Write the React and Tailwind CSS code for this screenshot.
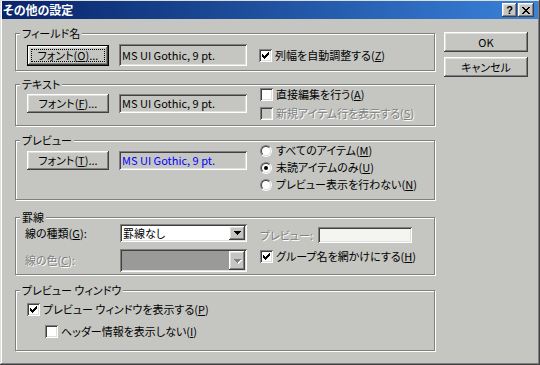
import React from 'react';

// Win2000-style bevels
const RAISED = 'bg-[#c5c6c2] shadow-[inset_-1px_-1px_#404040,inset_1px_1px_#fff,inset_-2px_-2px_#808080,inset_2px_2px_#dfdfdf]';
const SUNKEN = 'shadow-[inset_1px_1px_#808080,inset_-1px_-1px_#fff,inset_2px_2px_#404040,inset_-2px_-2px_#dfdfdf]';
const DISABLED = 'text-[#808080] [text-shadow:1px_1px_0_#fff]';

function Button({ className = '', children }) {
  return (
    <div className={`${RAISED} flex items-center justify-center shrink-0 ${className}`}>
      {children}
    </div>
  );
}

function FocusButton({ className = '', children }) {
  return (
    <div className={`border border-black shrink-0 flex ${className}`}>
      <div className={`${RAISED} flex-1 p-[3px] flex`}>
        <div className="flex-1 border border-dotted border-black flex items-center justify-center">
          {children}
        </div>
      </div>
    </div>
  );
}

function Field({ className = '', children }) {
  return (
    <div className={`${SUNKEN} flex items-center pl-[3px] shrink-0 ${className}`}>
      {children}
    </div>
  );
}

function CheckBox({ checked, disabled }) {
  return (
    <span className={`relative w-[13px] h-[13px] shrink-0 ${disabled ? 'bg-[#c5c6c2]' : 'bg-white'} ${SUNKEN}`}>
      {checked && (
        <svg className="absolute inset-0" width="13" height="13" viewBox="0 0 13 13" shapeRendering="crispEdges">
          <path
            fill="#000"
            d="M3 5h1v3H3z M4 6h1v3H4z M5 7h1v3H5z M6 6h1v3H6z M7 5h1v3H7z M8 4h1v3H8z M9 3h1v3H9z"
          />
        </svg>
      )}
    </span>
  );
}

function Radio({ checked }) {
  return (
    <span className="w-[12px] h-[12px] shrink-0 rounded-full border border-t-[#808080] border-l-[#808080] border-r-white border-b-white flex">
      <span className="flex-1 rounded-full border border-t-[#404040] border-l-[#404040] border-r-[#dfdfdf] border-b-[#dfdfdf] bg-white flex items-center justify-center">
        {checked && <span className="w-[4px] h-[4px] rounded-full bg-black" />}
      </span>
    </span>
  );
}

function Group({ label, className = '', children }) {
  return (
    <div className={`relative border border-[#808080] shadow-[inset_1px_1px_#fff,1px_1px_#fff] ${className}`}>
      <span className="absolute -top-[7px] left-[4px] px-[2px] bg-[#c5c6c2] leading-[13px]">{label}</span>
      {children}
    </div>
  );
}

function Arrow({ disabled }) {
  return (
    <svg width="7" height="4" viewBox="0 0 7 4" shapeRendering="crispEdges" className={disabled ? 'drop-shadow-[1px_1px_0_#fff]' : ''}>
      <path fill={disabled ? '#808080' : '#000'} d="M0 0h7v1H0z M1 1h5v1H1z M2 2h3v1H2z M3 3h1v1H3z" />
    </svg>
  );
}

export default function App() {
  return (
    <div className="w-[540px] h-[365px] overflow-hidden bg-[#c5c6c2] shadow-[inset_-1px_-1px_#404040,inset_1px_1px_#dfdfdf,inset_-2px_-2px_#808080,inset_2px_2px_#fff] pt-[1px] px-[2px] font-['Noto_Sans_CJK_JP','Noto_Sans',sans-serif] [font-feature-settings:'palt'] text-[11px] leading-none text-black">
      {/* title bar */}
      <div className="h-[18px] bg-linear-to-r from-[#0a246a] to-[#3a82da] flex items-center pl-[1px] pr-[4px]">
        <span className="text-white font-bold text-[12px]">その他の設定</span>
        <div className="ml-auto flex gap-[1px]">
          <Button className="w-[15px] h-[14px]">
            <span className="font-['Liberation_Sans',sans-serif] font-bold text-[11px]">?</span>
          </Button>
          <Button className="w-[16px] h-[14px]">
            <svg width="8" height="7" viewBox="0 0 8 7" shapeRendering="crispEdges">
              <path
                fill="#000"
                d="M0 0h2v1H0z M6 0h2v1H6z M1 1h2v1H1z M5 1h2v1H5z M2 2h4v1H2z M3 3h2v1H3z M2 4h4v1H2z M1 5h2v1H1z M5 5h2v1H5z M0 6h2v1H0z M6 6h2v1H6z"
              />
            </svg>
          </Button>
        </div>
      </div>

      <div className="flex">
        <div className="ml-[13px] w-[420px] flex flex-col">
          {/* フィールド名 */}
          <Group label="フィールド名" className="mt-[14px] h-[38px] pl-[11px] pt-[10px]">
            <div className="flex items-center">
              <FocusButton className="w-[82px] h-[21px]">
                フォント(<u>O</u>)...
              </FocusButton>
              <Field className="ml-[10px] w-[128px] h-[22px]">MS UI Gothic, 9 pt.</Field>
              <label className="ml-[12px] flex items-center gap-[3px]">
                <CheckBox checked />
                <span>列幅を自動調整する(<u>Z</u>)</span>
              </label>
            </div>
          </Group>

          {/* テキスト */}
          <Group label="テキスト" className="mt-[13px] h-[42px] pl-[11px] pt-[1px] flex items-start">
            <div className="mt-[8px] flex">
              <Button className="w-[82px] h-[19px]">フォント(<u>F</u>)...</Button>
              <Field className="ml-[10px] w-[128px] h-[19px]">MS UI Gothic, 9 pt.</Field>
            </div>
            <div className="ml-[13px] flex flex-col gap-[2px]">
              <label className="h-[17px] flex items-center gap-[3px]">
                <CheckBox />
                <span>直接編集を行う(<u>A</u>)</span>
              </label>
              <label className="h-[17px] flex items-center gap-[3px]">
                <CheckBox disabled />
                <span className={DISABLED}>新規アイテム行を表示する(<u>S</u>)</span>
              </label>
            </div>
          </Group>

          {/* プレビュー */}
          <Group label="プレビュー" className="mt-[14px] h-[60px] pl-[11px] pt-[1px] flex items-start">
            <div className="mt-[9px] flex">
              <Button className="w-[82px] h-[19px]">フォント(<u>T</u>)...</Button>
              <Field className="ml-[10px] w-[128px] h-[19px] text-[#0000ff]">MS UI Gothic, 9 pt.</Field>
            </div>
            <div className="ml-[13px] flex flex-col">
              <label className="h-[17px] flex items-center gap-[4px]">
                <Radio />
                <span>すべてのアイテム(<u>M</u>)</span>
              </label>
              <label className="h-[17px] flex items-center gap-[4px]">
                <Radio checked />
                <span>未読アイテムのみ(<u>U</u>)</span>
              </label>
              <label className="h-[17px] flex items-center gap-[4px]">
                <Radio />
                <span>プレビュー表示を行わない(<u>N</u>)</span>
              </label>
            </div>
          </Group>

          {/* 罫線 */}
          <Group label="罫線" className="mt-[17px] h-[58px] pl-[9px] pt-[6px] flex items-start">
            <div className="grid grid-cols-[95px_127px] gap-y-[7px] items-center">
              <span>線の種類(<u>G</u>):</span>
              <div className={`h-[18px] bg-white ${SUNKEN} flex items-center pl-[3px] pr-[2px]`}>
                <span>罫線なし</span>
                <Button className="ml-auto w-[16px] h-[14px]">
                  <Arrow />
                </Button>
              </div>
              <span className={DISABLED}>線の色(<u>C</u>):</span>
              <div className={`h-[23px] bg-[#9a9b98] ${SUNKEN} flex items-center pr-[2px]`}>
                <Button className="ml-auto w-[16px] h-[19px]">
                  <Arrow disabled />
                </Button>
              </div>
            </div>
            <div className="ml-[13px] mt-[3px] flex flex-col">
              <div className="h-[16px] flex items-center">
                <span className={`w-[58px] ${DISABLED}`}>プレビュー:</span>
                <div className={`w-[94px] h-[16px] bg-[#f4f5f1] ${SUNKEN}`} />
              </div>
              <label className="mt-[6px] h-[15px] flex items-center gap-[3px]">
                <CheckBox checked />
                <span>グループ名を網かけにする(<u>H</u>)</span>
              </label>
            </div>
          </Group>

          {/* プレビュー ウィンドウ */}
          <Group label="プレビュー ウィンドウ" className="mt-[15px] h-[61px] pl-[11px] pt-[10px] flex flex-col">
            <label className="h-[17px] flex items-center gap-[3px]">
              <CheckBox checked />
              <span>プレビュー ウィンドウを表示する(<u>P</u>)</span>
            </label>
            <label className="mt-[5px] ml-[18px] h-[17px] flex items-center gap-[3px]">
              <CheckBox />
              <span>ヘッダー情報を表示しない(<u>I</u>)</span>
            </label>
          </Group>
        </div>

        {/* OK / キャンセル */}
        <div className="ml-[9px] mt-[13px] flex flex-col gap-[5px]">
          <Button className="w-[84px] h-[20px]">OK</Button>
          <Button className="w-[84px] h-[20px]">キャンセル</Button>
        </div>
      </div>
    </div>
  );
}
